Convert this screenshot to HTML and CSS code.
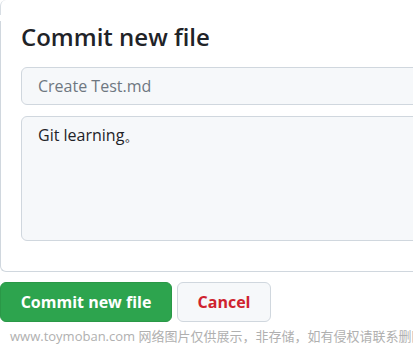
FILE: index.html
```html
<!DOCTYPE html>
<html lang="zh">
<head>
<meta charset="utf-8">
<link rel="stylesheet" href="styles.css">
</head>
<body>
<div class="page">
  <div class="stub"></div>
  <div class="panel">
    <h2 class="title">Commit new file</h2>
    <div class="input">Create Test.md</div>
    <div class="textarea">Git learning。</div>
  </div>
  <div class="actions">
    <button class="btn btn-primary">Commit new file</button>
    <button class="btn btn-cancel">Cancel</button>
  </div>
  <div class="watermark">www.toymoban.com 网络图片仅供展示，非存储，如有侵权请联系删除。</div>
</div>
</body>
</html>
```
FILE: styles.css
```css
html, body {
  margin: 0;
  padding: 0;
  background: #ffffff;
}
body {
  width: 413px;
  height: 345px;
  overflow: hidden;
  font-family: "Open Sans", "Noto Sans", sans-serif;
  color: #1f2328;
}
.page {
  width: 430px;
}
.stub {
  height: 15px;
  border-left: 1px solid #d8dee4;
  border-top-left-radius: 6px;
  margin-bottom: 13px;
}
.panel {
  border-left: 1px solid #d0d7de;
  border-bottom: 1px solid #d0d7de;
  border-bottom-left-radius: 6px;
  padding: 0 0 30px 20px;
}
.title {
  margin: -7px 0 0 0;
  font-size: 24px;
  font-weight: 600;
  line-height: 32px;
  color: #1f2328;
}
.input {
  margin-top: 14px;
  height: 36px;
  line-height: 36px;
  padding-left: 16px;
  background: #f6f8fa;
  border: 1px solid #d0d7de;
  border-radius: 6px;
  font-size: 16px;
  color: #6e7781;
}
.textarea {
  margin-top: 11px;
  height: 117px;
  padding: 6px 0 0 16px;
  line-height: 24px;
  background: #f6f8fa;
  border: 1px solid #d0d7de;
  border-radius: 6px;
  font-size: 16px;
  color: #1f2328;
}
.actions {
  display: flex;
  gap: 5px;
  margin-top: 10px;
}
.btn {
  height: 40px;
  border-radius: 6px;
  font-family: "Open Sans", "Noto Sans", sans-serif;
  font-size: 16px;
  font-weight: 700;
  padding: 0;
  cursor: pointer;
}
.btn-primary {
  width: 172px;
  background: #2da44e;
  border: 1px solid #2a9847;
  color: #ffffff;
}
.btn-cancel {
  width: 94px;
  background: #f6f8fa;
  border: 1px solid #d0d7de;
  color: #cf222e;
}
.watermark {
  margin-top: 5px;
  padding-left: 10px;
  white-space: nowrap;
  font-family: "Open Sans", "Noto Sans CJK SC", sans-serif;
  font-size: 13px;
  color: #b0b0b0;
  line-height: 18px;
}
```
